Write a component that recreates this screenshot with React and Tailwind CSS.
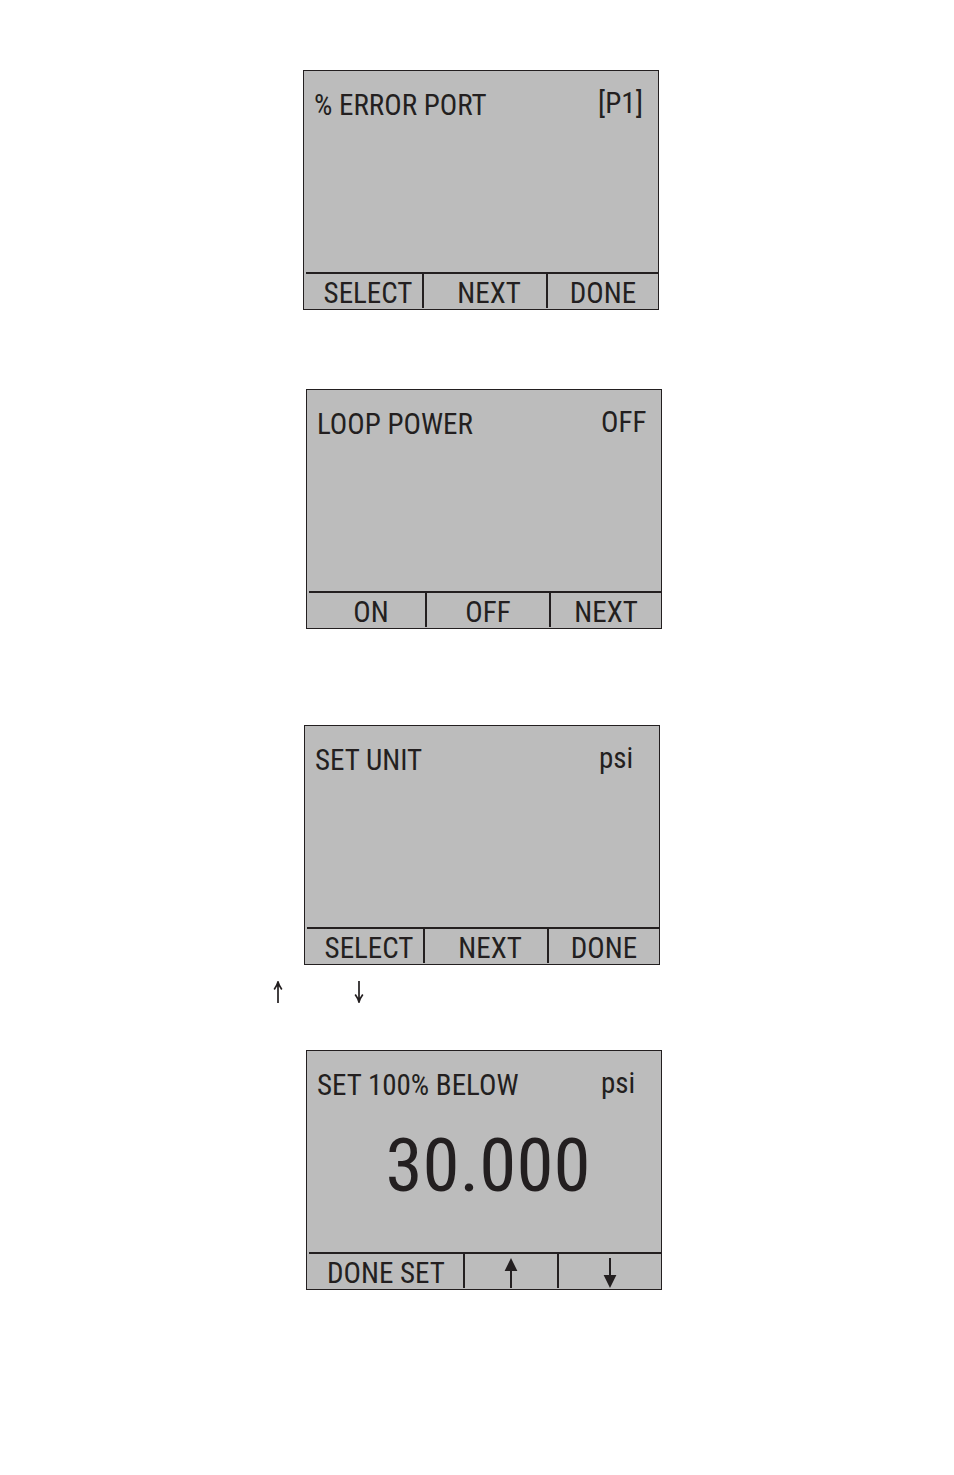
function ArrowThin({ down = false }) {
  return (
    <svg
      viewBox="0 0 10 22"
      className="h-[22px] w-2.5"
      fill="none"
      stroke="#231f20"
      strokeWidth="1.7"
      role="img"
      aria-label={down ? "Down arrow" : "Up arrow"}
    >
      <path d={down ? "M5 0V21M1.2 13.5Q3.8 17 5 21Q6.2 17 8.8 13.5" : "M5 22V1M1.2 8.5Q3.8 5 5 1Q6.2 5 8.8 8.5"} />
    </svg>
  );
}

function ArrowSolid({ down = false }) {
  return (
    <svg viewBox="0 0 14 30" className="h-[30px] w-3.5" aria-hidden="true">
      <path
        d={down ? "M6 0H8V17H13.4L7 30L0.6 17H6Z" : "M6 30H8V13H13.4L7 0L0.6 13H6Z"}
        fill="#231f20"
      />
    </svg>
  );
}

function SoftKey({ children, className = "", label }) {
  return (
    <button
      type="button"
      aria-label={label}
      className={`flex items-center justify-center border-[#231f20] pt-1 leading-[30px] whitespace-nowrap not-last:border-r-2 ${className}`}
    >
      {children}
    </button>
  );
}

function Screen({ title, value, columns, children, keys }) {
  return (
    <section className="flex min-h-[240px] w-full max-w-[356px] flex-col border border-[#231f20] bg-[#bcbcbc] text-[29px] leading-9">
      <header className="flex items-start justify-between pt-3.5 pl-2.5">
        <h2 className="pt-0.5 whitespace-nowrap">{title}</h2>
        <span className="w-[60px]">{value}</span>
      </header>
      {children}
      <footer className={`mt-auto ml-0.5 grid h-[37px] border-t-2 border-[#231f20] pb-px ${columns}`}>
        {keys}
      </footer>
    </section>
  );
}

const THREE_KEYS = "grid-cols-[118fr_124fr_110fr]";
const WIDE_FIRST = "grid-cols-[156fr_94fr_102fr]";

export default function App() {
  return (
    <main className="flex flex-col pt-[70px] pb-16 font-['Roboto_Condensed','Liberation_Sans',sans-serif] text-[#231f20]">
      <div className="flex justify-center pl-2">
        <Screen
          title="% ERROR PORT"
          value="[P1]"
          columns={THREE_KEYS}
          keys={
            <>
              <SoftKey className="pl-2">SELECT</SoftKey>
              <SoftKey className="pl-2">NEXT</SoftKey>
              <SoftKey>DONE</SoftKey>
            </>
          }
        />
      </div>

      <div className="mt-[79px] flex justify-center pl-3.5">
        <Screen
          title="LOOP POWER"
          value="OFF"
          columns={THREE_KEYS}
          keys={
            <>
              <SoftKey className="pl-2">ON</SoftKey>
              <SoftKey>OFF</SoftKey>
              <SoftKey>NEXT</SoftKey>
            </>
          }
        />
      </div>

      <div className="mt-24 flex justify-center pl-2.5">
        <Screen
          title="SET UNIT"
          value="psi"
          columns={THREE_KEYS}
          keys={
            <>
              <SoftKey className="pl-2">SELECT</SoftKey>
              <SoftKey className="pl-2">NEXT</SoftKey>
              <SoftKey>DONE</SoftKey>
            </>
          }
        />
      </div>

      <div className="mx-auto mt-4 flex w-full max-w-[408px] gap-[71px]">
        <ArrowThin />
        <ArrowThin down />
      </div>

      <div className="mt-[47px] flex justify-center pl-3.5">
        <Screen
          title="SET 100% BELOW"
          value="psi"
          columns={WIDE_FIRST}
          keys={
            <>
              <SoftKey>DONE SET</SoftKey>
              <SoftKey label="Increase">
                <ArrowSolid />
              </SoftKey>
              <SoftKey label="Decrease">
                <ArrowSolid down />
              </SoftKey>
            </>
          }
        >
          <output className="pt-5 pl-2 text-center text-[75px] leading-[84px]">30.000</output>
        </Screen>
      </div>
    </main>
  );
}
